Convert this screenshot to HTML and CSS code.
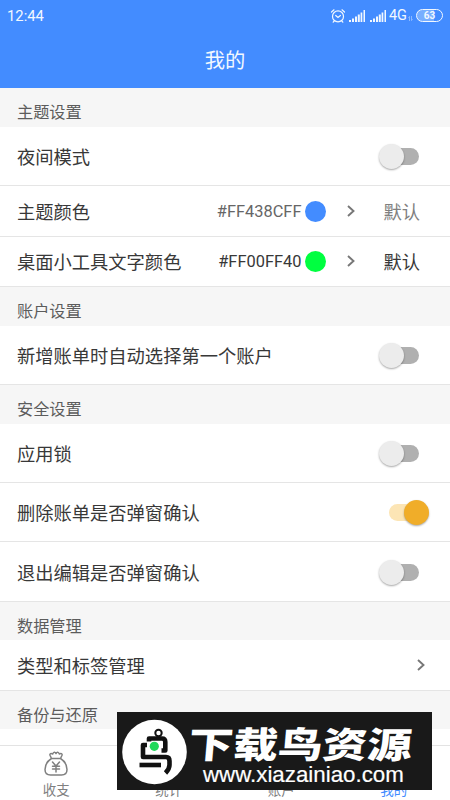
FILE: index.html
```html
<!DOCTYPE html>
<html lang="zh-CN">
<head>
<meta charset="utf-8">
<title>我的</title>
<link rel="stylesheet" href="styles.css">
</head>
<body>
<div class="app">
  <header class="header">
    <div class="status">
      <span class="time">12:44</span>
      <div class="status-icons">
        <svg class="alarm" width="16" height="16" viewBox="0 0 16 16" fill="none" stroke="currentColor" stroke-width="1.2" stroke-linecap="round"><circle cx="8" cy="8.4" r="5.5"/><path d="M1.5 4 4 1.8M14.5 4 12 1.8M5.7 7.5 8 9.5l2.4-2M4.2 13l-1 1.2M11.8 13l1 1.2"/></svg>
        <svg class="signal" width="17" height="12" viewBox="0 0 17 12" fill="currentColor"><path d="M0 10h2v2H0zM3 8.500h2V12H3zM6 6.500h2V12H6zM8.800 4.500h2V12h-2zM11.600 2.500h1.700V12h-1.700zM14.500 0H16v12h-1.500z"/></svg>
        <svg class="signal" width="17" height="12" viewBox="0 0 17 12" fill="currentColor"><path d="M0 10h2v2H0zM3 8.500h2V12H3zM6 6.500h2V12H6zM8.800 4.500h2V12h-2zM11.600 2.500h1.700V12h-1.700zM14.500 0H16v12h-1.500z"/></svg>
        <span class="network">4G</span>
        <svg class="updown" width="5" height="5" viewBox="0 0 5 5" fill="none" stroke="currentColor" stroke-width=".7"><path d="M1.500 5V.5L.4 1.700M3.500 0v4.500l1.100-1.200"/></svg>
        <span class="battery">63</span>
      </div>
    </div>
    <h1 class="title">我的</h1>
  </header>

  <main class="settings">
    <h2 class="section">主题设置</h2>
    <div class="row tall"><span>夜间模式</span><i class="switch"></i></div>
    <div class="row">
      <span>主题颜色</span>
      <div class="color muted"><span class="hex">#FF438CFF</span><i class="dot blue"></i><svg class="chevron" width="10" height="14" viewBox="0 0 10 14"><path d="m2 2 5.500 5L2 12"/></svg><span class="default">默认</span></div>
    </div>
    <div class="row short">
      <span>桌面小工具文字颜色</span>
      <div class="color"><span class="hex">#FF00FF40</span><i class="dot green"></i><svg class="chevron" width="10" height="14" viewBox="0 0 10 14"><path d="m2 2 5.500 5L2 12"/></svg><span class="default">默认</span></div>
    </div>
    <h2 class="section">账户设置</h2>
    <div class="row tall"><span>新增账单时自动选择第一个账户</span><i class="switch"></i></div>
    <h2 class="section">安全设置</h2>
    <div class="row tall"><span>应用锁</span><i class="switch"></i></div>
    <div class="row tall"><span>删除账单是否弹窗确认</span><i class="switch on"></i></div>
    <div class="row tall last"><span>退出编辑是否弹窗确认</span><i class="switch"></i></div>
    <h2 class="section compact">数据管理</h2>
    <div class="row"><span>类型和标签管理</span><svg class="chevron end" width="10" height="14" viewBox="0 0 10 14"><path d="m2 2 5.500 5L2 12"/></svg></div>
    <h2 class="section compact">备份与还原</h2>
  </main>

  <nav class="tabs">
    <div class="tab">
      <svg class="bag" width="24" height="26" viewBox="0 0 24 26" fill="none" stroke="currentColor" stroke-width="1.500" stroke-linejoin="round" stroke-linecap="round"><path d="M7.500 7.500C3.500 10 1 14.500 1 18.500 1 22.500 3 24 6.500 24h11c3.500 0 5.500-1.500 5.500-5.500 0-4-2.500-8.500-6.500-11zM7.500 7.500 6 4.300C5.500 2.500 7 2 8.700 3 9.500 1 11 .8 12 2.500 13 .8 14.500 1 15.300 3 17 2 18.500 2.500 18 4.300L16.500 7.500M8.500 11 12 15l3.500-4M12 15v6M8.500 15.300h7M8.500 18h7"/></svg>
      <span>收支</span>
    </div>
    <div class="tab"><span>统计</span></div>
    <div class="tab"><span>账户</span></div>
    <div class="tab active"><span>我的</span></div>
  </nav>

  <aside class="watermark">
    <svg class="bird" width="66" height="66" viewBox="0 0 66 66"><circle cx="33.500" cy="33" r="32.300" fill="#fff"/><g fill="none" stroke="#111" stroke-width="4.600" stroke-linejoin="round"><path d="M28 22.500V19.500H41Q44.300 19.500 44.300 23V31.500H40.500"/><path d="M26 26H22V38H45Q48.500 38 48.500 42V46Q48.500 50 44.500 54"/><path d="M18.500 46H40"/><circle cx="37.500" cy="14" r="3.200" stroke-width="2"/></g><circle cx="33.300" cy="27.300" r="4.600" fill="#20d85a"/></svg>
    <div class="brand"><strong>下载鸟资源</strong><span>www.xiazainiao.com</span></div>
  </aside>
</div>
</body>
</html>
```
FILE: styles.css
```css
* { box-sizing: border-box; }
body {
  margin: 0;
  background: #fff;
  color: #383838;
  font-family: Roboto, "Noto Sans CJK SC", sans-serif;
}
.app {
  position: relative;
  display: flex;
  flex-direction: column;
  width: 450px;
  height: 800px;
  overflow: hidden;
}
.header {
  height: 88px;
  background: #438cff;
  color: #f2f8ff;
}
.status {
  display: flex;
  align-items: center;
  justify-content: space-between;
  height: 32px;
  padding: 0 7px;
}
.time { font-size: 14.800px; }
.status-icons { display: flex; align-items: center; margin-top: -1px; }
.alarm { margin-right: -1px; }
.signal { margin-left: 4px; }
.network { margin-left: 2px; font-size: 14.500px; }
.updown { margin: 5px 3px 0 1px; opacity: .6; }
.battery {
  width: 27px;
  height: 13px;
  border: 1.500px solid currentColor;
  border-radius: 7px;
  background: linear-gradient(90deg, #78aeff 68%, #438cff 68%);
  font-size: 10px;
  font-weight: 700;
  line-height: 11px;
  text-align: center;
}
.title {
  margin: 0;
  font-size: 20.300px;
  font-weight: 400;
  line-height: 58px;
  text-align: center;
}
.section {
  height: 39px;
  margin: 0;
  padding: 5px 17px 0;
  background: #f6f6f6;
  color: #5c5c5c;
  font-size: 16.200px;
  font-weight: 400;
  line-height: 39px;
}
.section.compact { height: 38px; }
.row {
  display: flex;
  align-items: center;
  justify-content: space-between;
  height: 51px;
  padding: 0 17px;
  border-bottom: 1px solid #e5e5e5;
  font-size: 18.270px;
  white-space: nowrap;
}
.row.tall { height: 59px; padding-top: 1px; }
.row.tall.last { height: 60px; }
.row.short { height: 50px; padding-bottom: 1px; }
.row.tall > span { margin-top: -1px; }
.switch {
  position: relative;
  width: 30px;
  height: 17px;
  margin-right: 14px;
  border-radius: 9px;
  background: #b0b0b0;
}
.switch::after {
  content: "";
  position: absolute;
  top: -4px;
  left: -10px;
  width: 25px;
  height: 25px;
  border-radius: 50%;
  background: #ececec;
  box-shadow: 0 1px 2px rgba(0, 0, 0, .35);
}
.switch.on { background: #fce5b5; }
.switch.on::after { left: 15px; background: #f0ad29; }
.color { display: flex; align-items: center; margin-right: 13px; }
.hex { font-size: 16.400px; }
.muted .hex { color: #666; }
.muted .default { color: #808080; }
.dot { width: 21px; height: 21px; margin-left: 4px; border-radius: 50%; }
.blue { background: #438cff; }
.green { background: #00ff40; }
.chevron { margin-left: 20px; fill: none; stroke: #777; stroke-width: 1.900; }
.chevron.end { margin-right: 7px; }
.default { margin-left: 27px; }
.tabs {
  display: flex;
  height: 55px;
  margin-top: 16px;
  border-top: 1px solid #e3e3e3;
  background: #fff;
  color: #808080;
}
.settings { flex: none; }
.tab {
  display: flex;
  flex: 1;
  flex-direction: column;
  align-items: center;
  justify-content: flex-end;
  font-size: 13.500px;
  line-height: 20px;
}
.bag { margin-bottom: 3px; }
.tab.active { color: #438cff; }
.watermark {
  position: absolute;
  left: 117px;
  top: 712px;
  display: flex;
  width: 315px;
  height: 78px;
  padding: 7px 0 0 4px;
  background: #191919;
  color: #fff;
}
.brand { display: flex; flex-direction: column; padding: 3px 0 0 2px; }
.brand strong {
  width: 190px;
  font: 900 36px/40px "Noto Sans CJK SC", sans-serif;
  white-space: nowrap;
  transform: scaleX(1.240) skewX(-4deg);
  transform-origin: left center;
}
.brand span { margin: 1px 0 0 14px; font: 22.300px/24px "Liberation Sans", sans-serif; -webkit-text-stroke: .2px #fff; }
```
